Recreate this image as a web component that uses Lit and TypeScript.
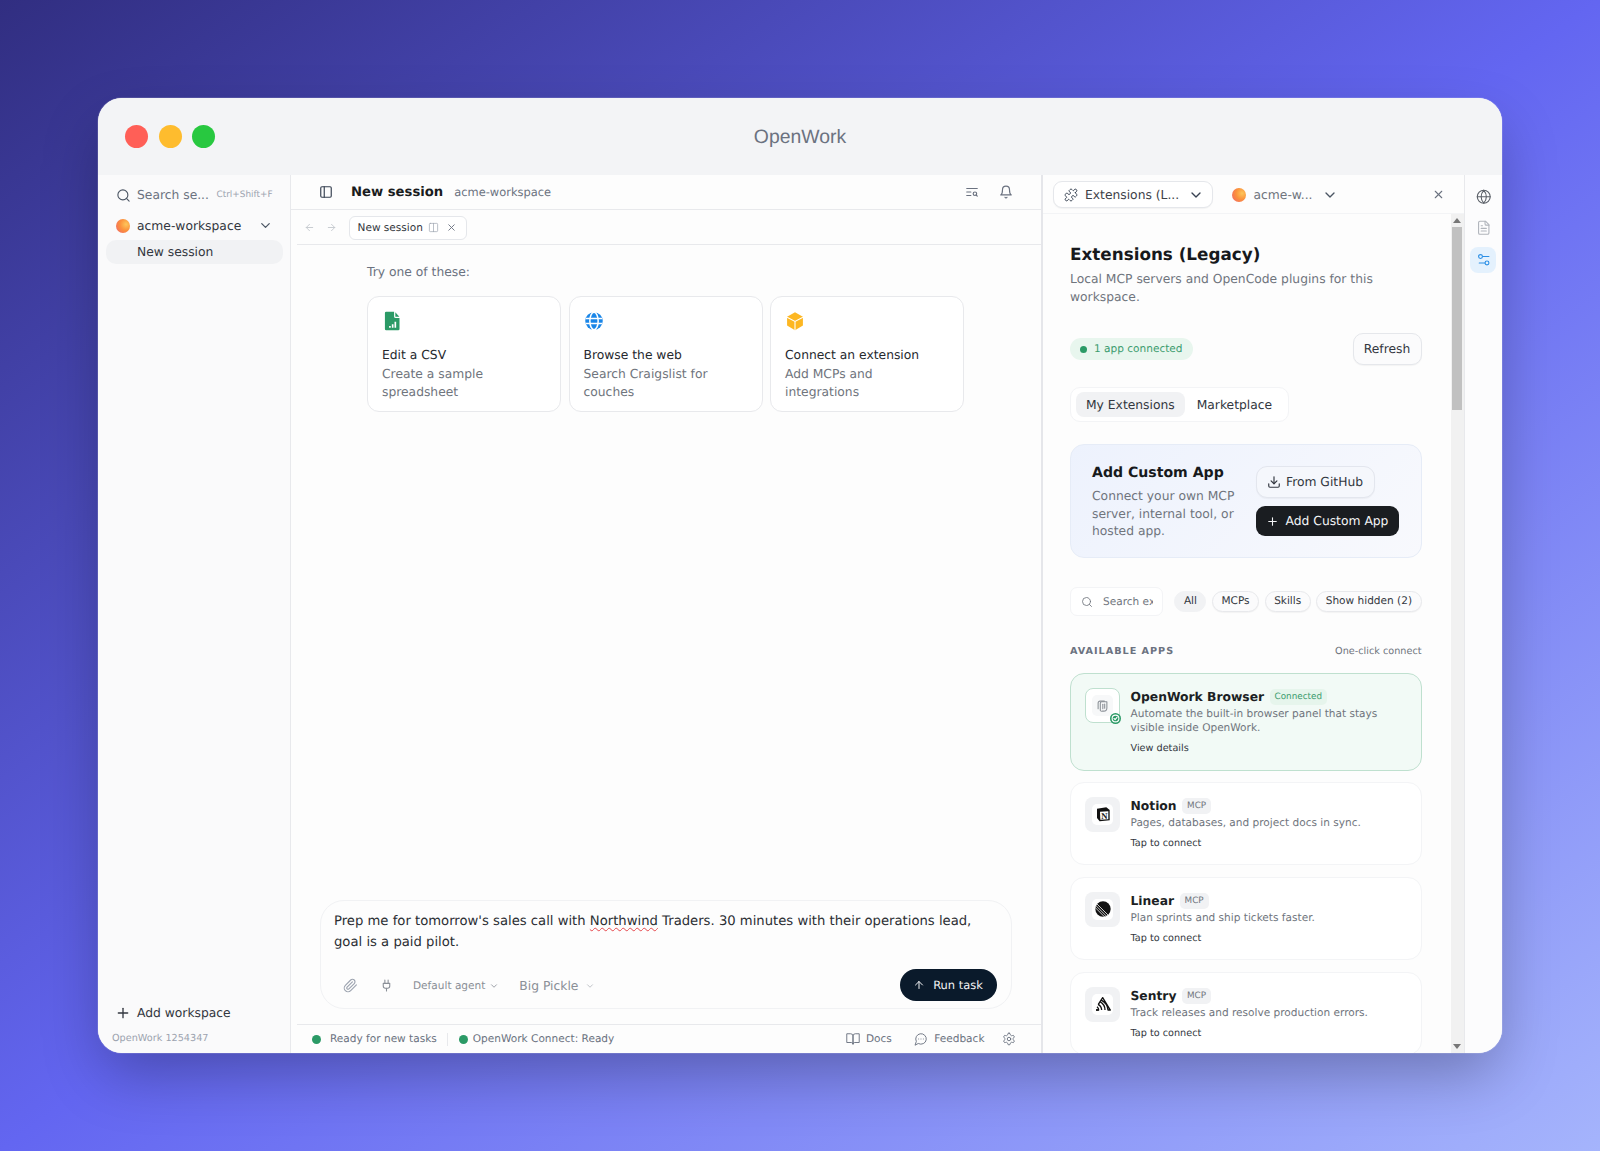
import { LitElement, html, css, svg } from "lit";
import { customElement } from "lit/decorators.js";

const ic = (body: unknown, cls = "") => html`<svg class="ic ${cls}" viewBox="0 0 24 24" fill="none" stroke="currentColor" stroke-width="2" stroke-linecap="round" stroke-linejoin="round">${body}</svg>`;

const I = {
  search: svg`<circle cx="11" cy="11" r="8"/><path d="m21 21-4.3-4.3"/>`,
  panel: svg`<rect x="3" y="3" width="18" height="18" rx="2"/><path d="M9 3v18"/>`,
  chev: svg`<path d="m6 9 6 6 6-6"/>`,
  left: svg`<path d="m12 19-7-7 7-7"/><path d="M19 12H5"/>`,
  right: svg`<path d="M5 12h14"/><path d="m12 5 7 7-7 7"/>`,
  cols: svg`<rect x="3" y="3" width="18" height="18" rx="2"/><path d="M12 3v18"/>`,
  x: svg`<path d="M18 6 6 18"/><path d="m6 6 12 12"/>`,
  textSearch: svg`<path d="M21 6H3"/><path d="M10 12H3"/><path d="M10 18H3"/><circle cx="17" cy="15" r="3"/><path d="m21 19-1.9-1.9"/>`,
  bell: svg`<path d="M6 8a6 6 0 0 1 12 0c0 7 3 9 3 9H3s3-2 3-9"/><path d="M10.3 21a1.94 1.94 0 0 0 3.4 0"/>`,
  puzzle: svg`<path d="M19.439 7.85c-.049.322.059.648.289.878l1.568 1.568c.47.47.706 1.087.706 1.704s-.235 1.233-.706 1.704l-1.611 1.611a.98.98 0 0 1-.837.276c-.47-.07-.802-.48-.968-.925a2.501 2.501 0 1 0-3.214 3.214c.446.166.855.497.925.968a.979.979 0 0 1-.276.837l-1.61 1.61a2.404 2.404 0 0 1-1.705.707 2.402 2.402 0 0 1-1.704-.706l-1.568-1.568a1.026 1.026 0 0 0-.877-.29c-.493.074-.84.504-1.02.968a2.5 2.5 0 1 1-3.237-3.237c.464-.18.894-.527.967-1.02a1.026 1.026 0 0 0-.289-.877l-1.568-1.568A2.402 2.402 0 0 1 1.998 12c0-.617.236-1.234.706-1.704L4.23 8.77c.24-.24.581-.353.917-.303.515.077.877.528 1.073 1.01a2.5 2.5 0 1 0 3.259-3.259c-.482-.196-.933-.558-1.01-1.073-.05-.336.062-.676.303-.917l1.525-1.525A2.402 2.402 0 0 1 12 1.998c.617 0 1.234.236 1.704.706l1.568 1.568c.23.23.556.338.877.29.493-.074.84-.504 1.02-.968a2.5 2.5 0 1 1 3.237 3.237c-.464.18-.894.527-.967 1.02Z"/>`,
  globe: svg`<circle cx="12" cy="12" r="10"/><path d="M12 2a14.5 14.5 0 0 0 0 20 14.5 14.5 0 0 0 0-20"/><path d="M2 12h20"/>`,
  file: svg`<path d="M15 2H6a2 2 0 0 0-2 2v16a2 2 0 0 0 2 2h12a2 2 0 0 0 2-2V7Z"/><path d="M14 2v4a2 2 0 0 0 2 2h4"/><path d="M10 9H8"/><path d="M16 13H8"/><path d="M16 17H8"/>`,
  sliders: svg`<path d="M20 7h-9"/><path d="M14 17H5"/><circle cx="17" cy="17" r="3"/><circle cx="7" cy="7" r="3"/>`,
  download: svg`<path d="M21 15v4a2 2 0 0 1-2 2H5a2 2 0 0 1-2-2v-4"/><polyline points="7 10 12 15 17 10"/><line x1="12" y1="15" x2="12" y2="3"/>`,
  plus: svg`<path d="M5 12h14"/><path d="M12 5v14"/>`,
  clip: svg`<path d="m21.44 11.05-9.19 9.19a6 6 0 0 1-8.49-8.49l8.57-8.57A4 4 0 1 1 18 8.84l-8.59 8.57a2 2 0 0 1-2.83-2.83l8.49-8.48"/>`,
  plug: svg`<path d="M12 22v-5"/><path d="M9 8V2"/><path d="M15 8V2"/><path d="M18 8v5a4 4 0 0 1-4 4h-4a4 4 0 0 1-4-4V8Z"/>`,
  up: svg`<path d="m5 12 7-7 7 7"/><path d="M12 19V5"/>`,
  book: svg`<path d="M2 3h6a4 4 0 0 1 4 4v14a3 3 0 0 0-3-3H2z"/><path d="M22 3h-6a4 4 0 0 0-4 4v14a3 3 0 0 1 3-3h7z"/>`,
  msg: svg`<path d="M7.9 20A9 9 0 1 0 4 16.1L2 22Z"/><path d="M8 12h.01"/><path d="M12 12h.01"/><path d="M16 12h.01"/>`,
  gear: svg`<path d="M12.22 2h-.44a2 2 0 0 0-2 2v.18a2 2 0 0 1-1 1.73l-.43.25a2 2 0 0 1-2 0l-.15-.08a2 2 0 0 0-2.73.73l-.22.38a2 2 0 0 0 .73 2.73l.15.1a2 2 0 0 1 1 1.72v.51a2 2 0 0 1-1 1.74l-.15.09a2 2 0 0 0-.73 2.73l.22.38a2 2 0 0 0 2.73.73l.15-.08a2 2 0 0 1 2 0l.43.25a2 2 0 0 1 1 1.73V20a2 2 0 0 0 2 2h.44a2 2 0 0 0 2-2v-.18a2 2 0 0 1 1-1.73l.43-.25a2 2 0 0 1 2 0l.15.08a2 2 0 0 0 2.73-.73l.22-.39a2 2 0 0 0-.73-2.73l-.15-.08a2 2 0 0 1-1-1.74v-.5a2 2 0 0 1 1-1.74l.15-.09a2 2 0 0 0 .73-2.73l-.22-.38a2 2 0 0 0-2.73-.73l-.15.08a2 2 0 0 1-2 0l-.43-.25a2 2 0 0 1-1-1.73V4a2 2 0 0 0-2-2z"/><circle cx="12" cy="12" r="3"/>`,
};

const sheetIcon = html`<svg class="card-ic" viewBox="0 0 24 24"><path fill="#2b9a66" d="M5 1h9.500v5.500a2 2 0 0 0 2 2H21V21.500a1.500 1.500 0 0 1-1.500 1.500H5a1.500 1.500 0 0 1-1.500-1.500V2.500A1.500 1.500 0 0 1 5 1Z"/><path fill="#2b9a66" d="M16 1.500 20.800 7H16.500a.5.5 0 0 1-.5-.5Z"/><path fill="#fff" d="M8.500 18h2v2h-2zM11.800 16h2v4h-2zM15 13h2v7h-2z"/></svg>`;
const webIcon = html`<svg class="card-ic" viewBox="0 0 24 24"><circle cx="12" cy="12" r="10.500" fill="#1a86e8"/><g fill="none" stroke="#fff" stroke-width="1.800"><ellipse cx="12" cy="12" rx="5" ry="10.500"/><path d="M2 9h20M2 15h20"/></g></svg>`;
const boxIcon = html`<svg class="card-ic" viewBox="0 0 24 24"><path fill="#fdb722" d="M12 1.500 21.500 7v10.500L12 23 2.500 17.500V7Z"/><path fill="none" stroke="#fff" stroke-width="1.300" d="M2.500 7.500 12 12.500l9.500-5M12 12.500V23"/></svg>`;

const browserLogo = html`<svg class="logo-ic" viewBox="0 0 24 24" fill="none" stroke="#8b9097" stroke-width="1.700" stroke-linecap="round" stroke-linejoin="round"><path d="M5 17V8a3 3 0 0 1 3-3h7"/><path d="M8.500 20V8.500a2.500 2.500 0 0 1 2.500-2.500h8V16a5 5 0 0 1-5 5h-2a3.500 3.500 0 0 1-3.500-1Z"/><path d="M12.500 10v7"/><path d="M15.500 9.500v7"/></svg>`;
const notionLogo = html`<svg class="logo-ic" viewBox="0 0 24 24"><path fill="#111" d="M3 4 17 2l5 4v15.500L7 23l-4-5Z"/><path fill="#fff" d="M7.500 8.800 20 8v11.800L8 20.800Z"/><text x="14" y="18.800" text-anchor="middle" font-family="Liberation Serif, serif" font-weight="700" font-size="13" fill="#111">N</text></svg>`;
const linearLogo = html`<svg class="logo-ic" viewBox="0 0 24 24"><circle cx="12" cy="12" r="11.500" fill="#111"/><g stroke="#fff" stroke-width="1.200"><path d="M0 9.500 14.500 24"/><path d="M0 5.500 18.500 24"/><path d="M1 2.500 21.500 23"/></g></svg>`;
const sentryLogo = html`<svg class="logo-ic" viewBox="0 0 24 24" fill="none" stroke="#111" stroke-width="2" stroke-linejoin="round"><path d="M1.500 21h4a6 6 0 0 0-2.500-5"/><path d="M5.500 21h-4"/><path d="M10 21a10 10 0 0 0-5.500-8.500"/><path d="M15 21A14.500 14.500 0 0 0 7.500 8.500"/><path d="M5 12.500 11.500 2.500 23 21h-3.500a18 18 0 0 0-9.500-14.500"/></svg>`;

const apps = [
  { name: "Notion", desc: "Pages, databases, and project docs in sync.", logo: notionLogo },
  { name: "Linear", desc: "Plan sprints and ship tickets faster.", logo: linearLogo },
  { name: "Sentry", desc: "Track releases and resolve production errors.", logo: sentryLogo },
];

@customElement("app-root")
export class AppRoot extends LitElement {
  static styles = css`
    :host {
      display: block;
      height: 1151px;
      box-sizing: border-box;
      padding: 98px;
      overflow: hidden;
      font-family: "DejaVu Sans", sans-serif;
      text-rendering: geometricPrecision;
      color: #1c1f24;
      background: linear-gradient(to bottom right, #312e81 0%, #6366f1 50%, #a5b4fc 100%);
    }
    * { box-sizing: border-box; }
    .ic { display: block; flex: none; width: 14px; height: 14px; }
    .window {
      height: 955px;
      border-radius: 24px;
      overflow: hidden;
      display: flex;
      flex-direction: column;
      background: #fdfdfd;
      box-shadow: 0 0 0 1px rgba(255,255,255,.12), 0 25px 60px -5px rgba(0,0,0,.28);
    }
    .titlebar {
      flex: none;
      height: 77px;
      background: #f3f4f6;
      display: flex;
      align-items: center;
      padding-left: 27px;
    }
    .lights { display: flex; gap: 10.500px; }
    .light { width: 23px; height: 23px; border-radius: 50%; }
    .red { background: #ff5f57; } .yellow { background: #febc2e; } .green { background: #28c840; }
    .app-title {
      flex: 1;
      text-align: center;
      margin-left: -117px;
      padding-top: 2px;
      font-family: "Liberation Sans", sans-serif;
      font-size: 19.400px;
      color: #6b7280;
    }
    .body { flex: 1; min-height: 0; display: flex; }

    .sidebar {
      flex: none;
      width: 193px;
      background: #fafafb;
      border-right: 1px solid #e8e9ec;
      display: flex;
      flex-direction: column;
      padding: 0 7.500px 0 8px;
    }
    .side-search { display: flex; align-items: center; height: 40px; padding: 0 0 0 10px; color: #6b7280; font-size: 12.320px; white-space: nowrap; }
    .side-search .ic { width: 15px; height: 15px; margin-right: 6px; color: #4b5563; stroke-width: 1.800; }
    .side-search .kbd { margin-left: auto; margin-right: 10px; font-size: 8.900px; color: #9ca3af; }
    .ws { display: flex; align-items: center; height: 27px; margin-top: -3px; padding-left: 10px; font-size: 12.320px; color: #333740; white-space: nowrap; }
    .avatar { flex: none; width: 14px; height: 14px; border-radius: 50%; background: radial-gradient(circle at 72% 38%, #fdc65a, #fb923c 45%, #f0616d 100%); }
    .ws .avatar { margin-right: 7px; }
    .ws .ic { margin-left: auto; margin-right: 10px; width: 15px; height: 15px; color: #4b5563; }
    .side-item { height: 24px; margin-top: 1px; border-radius: 10px; background: #f1f2f4; padding-left: 31px; font-size: 12.320px; line-height: 24px; color: #333740; }
    .grow { flex: 1; }
    .add-ws { display: flex; align-items: center; gap: 6px; height: 16px; padding-left: 9px; font-size: 12.320px; color: #333740; margin-bottom: 12px; }
    .add-ws .ic { width: 16px; height: 16px; }
    .version { font-size: 9.680px; color: #9ca3af; padding: 0 0 9.500px 6px; }

    .main { flex: 1; min-width: 0; display: flex; flex-direction: column; background: #fdfdfd; }
    .main-head { flex: none; height: 35px; border-bottom: 1px solid #e8e9ec; display: flex; align-items: center; padding: 0 28px; }
    .main-head .panel { width: 14px; height: 14px; color: #374151; margin-right: 18px; }
    .main-head b { font-size: 13.200px; font-weight: 700; color: #1a1c20; margin-right: 11px; }
    .main-head .sub { font-size: 11.440px; color: #6b7280; }
    .head-actions { margin-left: auto; display: flex; gap: 19.500px; color: #6b7280; }
    .tabs { flex: none; height: 35px; margin-left: 6px; padding-top: 1px; border-bottom: 1px solid #e8e9ec; display: flex; align-items: center; padding-left: 7px; }
    .tabs .arrow { width: 11px; height: 11px; color: #c4c8ce; margin-right: 11px; }
    .tab { display: flex; align-items: center; height: 24px; padding: 0 9px 0 7.500px; margin-left: 1px; border: 1px solid #e5e7eb; border-radius: 6px; background: #fff; font-size: 10.560px; color: #333740; white-space: nowrap; }
    .tab .cols { width: 11px; height: 11px; margin: 0 7.500px 0 5px; color: #9ca3af; stroke-width: 1.500; }
    .tab .x { width: 11px; height: 11px; color: #6b7280; }
    .content { flex: 1; min-height: 0; padding: 18px 0 0 76px; }
    .try { font-size: 12.320px; color: #6b7280; line-height: 18px; margin-bottom: 15px; }
    .cards { display: flex; gap: 7.500px; }
    .card { width: 194px; height: 116px; border: 1px solid #e8e9ec; border-radius: 12px; background: #fff; padding: 14px 14px 0 14px; }
    .card-ic { display: block; width: 20px; height: 20px; margin-bottom: 16px; }
    .card .t { font-size: 12.320px; line-height: 17px; color: #26292e; }
    .card .d { font-size: 12.320px; line-height: 17.500px; color: #70757d; margin-top: 2px; }
    .composer { flex: none; margin: 0 29px 15px 29px; height: 109px; border: 1px solid #f1f2f4; border-radius: 24px; padding: 10px 14px 0 13px; display: flex; flex-direction: column; background: #fdfdfd; }
    .prompt { font-size: 13.200px; line-height: 21px; color: #2b2e33; }
    .spell { text-decoration: underline wavy #e5484d 1px; text-underline-offset: 2px; }
    .tools { margin-top: auto; margin-bottom: 7px; display: flex; align-items: center; color: #8a8f97; margin-left: 9px; }
    .tools .clip { width: 15px; height: 15px; color: #9ca3af; margin-right: 21px; stroke-width: 1.800; }
    .tools .plug { width: 13px; height: 13px; color: #8a8f97; margin-left: 1px; margin-right: 20px; }
    .pick { display: flex; align-items: center; gap: 4px; padding-top: 2px; font-size: 10.560px; color: #8a8f97; margin-right: 20px; white-space: nowrap; }
    .pick.big { font-size: 12.320px; }
    .pick .ic { width: 10px; height: 10px; }
    .pick.big .ic { color: #b4b8be; margin-left: 3px; }
    .run { margin-left: auto; display: flex; align-items: center; justify-content: center; gap: 8px; width: 97px; height: 32px; border-radius: 16px; background: #0a1a2b; color: #f3f4f6; font-size: 11.440px; }
    .run .ic { width: 12px; height: 12px; }
    .status { flex: none; height: 29px; margin-left: 6px; border-top: 1px solid #e8e9ec; display: flex; align-items: center; padding: 0 25px 0 15px; font-size: 10.560px; color: #6b7280; white-space: nowrap; }
    .dot { flex: none; width: 9px; height: 9px; border-radius: 50%; background: #2b9a66; }
    .status .dot { margin-right: 9px; }
    .status .sep { width: 1px; height: 13px; background: #e8e9ec; margin: 0 10.500px; }
    .status .second { margin-right: 5px; }
    .status .link { display: flex; align-items: center; gap: 6px; margin-left: 22.500px; }
    .status .first-link { margin-left: auto; }
    .status .gear-link { margin-left: 17px; }
    .status .link .ic { width: 14px; height: 14px; stroke-width: 1.600; }

    .panel-r { flex: none; width: 423px; border-left: 2px solid #e5e6ea; display: flex; flex-direction: column; background: #fdfdfd; }
    .panel-head { flex: none; height: 39px; display: flex; align-items: center; padding: 1px 18.500px 0 10px; border-bottom: 1px solid #f3f4f6; white-space: nowrap; }
    .sel { display: flex; align-items: center; flex: none; width: 160.500px; height: 27px; border: 1px solid #e5e7eb; border-radius: 9px; background: #fff; padding: 0 8px 0 10px; font-size: 12.320px; color: #3d4148; box-shadow: 0 1px 1px rgba(0,0,0,.04); }
    .sel .ic { width: 14px; height: 14px; }
    .sel .pz { margin-right: 7.500px; color: #374151; stroke-width: 1.700; }
    .sel .cv { width: 16px; height: 16px; margin-left: auto; color: #374151; }
    .ws-sel { display: flex; align-items: center; margin-left: 18.500px; font-size: 12.320px; color: #70757d; }
    .ws-sel .avatar { margin-right: 8px; }
    .ws-sel .ic { width: 16px; height: 16px; margin-left: 9px; color: #4b5563; }
    .panel-head .close { margin-left: auto; width: 13px; height: 13px; color: #6b7280; }
    .panel-main { flex: 1; min-height: 0; display: flex; }
    .scroll { flex: 1; min-width: 0; overflow: hidden; padding: 27px 29px 0 27.500px; }
    .h1 { font-size: 16.800px; font-weight: 700; color: #17191c; line-height: 26px; }
    .desc { font-size: 12.320px; line-height: 17.500px; color: #70757d; margin-top: 4px; width: 330px; }
    .row { display: flex; align-items: center; justify-content: space-between; margin-top: 27px; }
    .badge { display: flex; align-items: center; gap: 7px; height: 22px; padding: 0 10px; border-radius: 11px; background: #e8f6ee; color: #3c9c6e; font-size: 10.560px; }
    .badge .dot { width: 7px; height: 7px; }
    .refresh { height: 32px; width: 69px; border: 1px solid #e5e7eb; border-radius: 10px; background: #fbfbfc; font-size: 12.320px; color: #333740; display: flex; align-items: center; justify-content: center; box-shadow: 0 1px 1px rgba(0,0,0,.04); }
    .seg { margin-top: 22px; display: inline-flex; gap: 1px; height: 35px; padding: 4px 5.500px 4px 4.500px; border: 1px solid #f3f4f6; border-radius: 10px; background: #fff; font-size: 12.320px; color: #333740; align-items: stretch; vertical-align: top; }
    .seg span { display: flex; align-items: center; justify-content: center; padding: 0 10.500px; border-radius: 8px; white-space: nowrap; }
    .seg .on { background: #f1f2f4; }
    .custom { margin-top: 22px; height: 114px; border: 1px solid #e6ecf7; border-radius: 14px; background: linear-gradient(135deg, #edf2fd, #f8f9fd); padding: 19px 22px 0 21px; display: flex; justify-content: space-between; }
    .custom .tt { font-size: 14.080px; font-weight: 700; color: #17191c; line-height: 18px; }
    .custom .dd { font-size: 12.320px; line-height: 17.500px; color: #70757d; margin-top: 6px; width: 160px; }
    .custom .btns { display: flex; flex-direction: column; align-items: flex-start; gap: 8px; padding-top: 2px; }
    .gh { height: 32px; width: 119px; border: 1px solid #e3e6ee; border-radius: 11px; background: #f5f7fc; display: flex; align-items: center; justify-content: center; gap: 5px; font-size: 12.320px; color: #333740; white-space: nowrap; box-shadow: 0 1px 1px rgba(0,0,0,.04); }
    .gh .ic { width: 14px; height: 14px; }
    .addbtn { height: 30px; width: 143px; border-radius: 9px; background: #1a1d21; color: #f3f4f6; display: flex; align-items: center; justify-content: center; gap: 7px; font-size: 12.320px; white-space: nowrap; }
    .addbtn .ic { width: 13px; height: 13px; }
    .filters { margin-top: 29px; display: flex; align-items: center; gap: 5.500px; }
    .sbox { flex: none; width: 93px; height: 29px; border: 1px solid #f3f4f6; border-radius: 7px; background: #fff; display: flex; align-items: center; padding: 0 10px; gap: 10px; font-size: 10.560px; color: #70757d; margin-right: auto; overflow: hidden; white-space: nowrap; }
    .sbox .ic { width: 12px; height: 12px; stroke-width: 1.700; }
    .sbox span { flex: none; width: 50px; overflow: hidden; }
    .pill { flex: none; height: 21px; padding: 0 8.500px; border: 1px solid #e8e9ec; border-radius: 11px; background: #fbfbfc; font-size: 10.560px; line-height: 19px; color: #333740; white-space: nowrap; box-shadow: 0 1px 1px rgba(0,0,0,.04); }
    .pill.on { background: #f1f2f4; border-color: #f1f2f4; box-shadow: none; }
    .sec { margin-top: 27px; display: flex; justify-content: space-between; align-items: center; height: 16px; }
    .sec b { font-size: 9.680px; font-weight: 700; letter-spacing: .1em; color: #6b7280; }
    .sec span { font-size: 9.680px; color: #70757d; }
    .app { display: flex; margin-bottom: 11.400px; border: 1px solid #f3f4f6; border-radius: 14px; background: #fff; padding: 14px 14px 0 14px; height: 83.500px; }
    .app.first { margin-top: 14px; height: 97.500px; background: #f2faf6; border-color: #bfe0cf; }
    .tile { position: relative; flex: none; width: 35px; height: 35px; border-radius: 8px; background: #f1f2f4; display: flex; align-items: center; justify-content: center; margin-right: 10.500px; }
    .first .tile { background: #fff; border: 1px solid #bfe0cf; }
    .inner { width: 21px; height: 21px; border-radius: 5px; background: #fff; display: flex; align-items: center; justify-content: center; }
    .logo-ic { display: block; width: 16px; height: 16px; }
    .first .logo-ic { width: 15px; height: 15px; }
    .first .inner { background: #f7f8f9; }
    .tick { position: absolute; right: -1.500px; bottom: -2px; width: 11px; height: 11px; border-radius: 50%; background: #2b9a66; color: #fff; display: flex; align-items: center; justify-content: center; }
    .tick svg { display: block; width: 9px; height: 9px; }
    .info { min-width: 0; padding-top: 1px; }
    .nm { display: flex; align-items: center; gap: 5.500px; height: 16px; }
    .nm b { font-size: 12.320px; font-weight: 700; color: #1c1f24; white-space: nowrap; }
    .tag { font-size: 8.800px; line-height: 16px; height: 16px; padding: 0 5px; border-radius: 5px; background: #f1f2f4; color: #70757d; }
    .first .tag { background: #e6f5ec; color: #3c9c6e; }
    .ds { font-size: 10.560px; line-height: 14px; color: #70757d; margin-top: 2px; }
    .act { font-size: 9.680px; color: #333740; line-height: 14px; margin-top: 7px; }

    .sb { flex: none; width: 13px; background: #f1f1f1; display: flex; flex-direction: column; align-items: center; }
    .sb .tri { flex: none; height: 13px; display: flex; align-items: center; justify-content: center; }
    .sb .tri svg { display: block; width: 8px; height: 5px; fill: #777; }
    .sb .thumb { flex: none; width: 9.500px; height: 183px; background: #c1c1c1; }
    .rail { flex: none; width: 38.500px; background: #fcfcfd; border-left: 1px solid #e8e9ec; display: flex; flex-direction: column; align-items: center; padding-top: 8.500px; gap: 5.500px; }
    .rail div { width: 26px; height: 26px; border-radius: 8px; display: flex; align-items: center; justify-content: center; color: #5b6068; }
    .rail .ic { width: 15.500px; height: 15.500px; stroke-width: 1.700; }
    .rail .dim { color: #b0b4bb; }
    .rail .act-r { background: #e4f1fd; color: #2b8fe6; }
  `;

  render() {
    return html`
      <div class="window">
        <div class="titlebar">
          <div class="lights"><div class="light red"></div><div class="light yellow"></div><div class="light green"></div></div>
          <div class="app-title">OpenWork</div>
        </div>
        <div class="body">
          <aside class="sidebar">
            <div class="side-search">${ic(I.search)}<span>Search se...</span><span class="kbd">Ctrl+Shift+F</span></div>
            <div class="ws"><span class="avatar"></span>acme-workspace${ic(I.chev)}</div>
            <div class="side-item">New session</div>
            <div class="grow"></div>
            <div class="add-ws">${ic(I.plus)}Add workspace</div>
            <div class="version">OpenWork 1254347</div>
          </aside>
          <main class="main">
            <div class="main-head">
              ${ic(I.panel, "panel")}
              <b>New session</b><span class="sub">acme-workspace</span>
              <div class="head-actions">${ic(I.textSearch)}${ic(I.bell)}</div>
            </div>
            <div class="tabs">
              ${ic(I.left, "arrow")}${ic(I.right, "arrow")}
              <div class="tab">New session${ic(I.cols, "cols")}${ic(I.x, "x")}</div>
            </div>
            <div class="content">
              <div class="try">Try one of these:</div>
              <div class="cards">
                <div class="card">${sheetIcon}<div class="t">Edit a CSV</div><div class="d">Create a sample spreadsheet</div></div>
                <div class="card">${webIcon}<div class="t">Browse the web</div><div class="d">Search Craigslist for couches</div></div>
                <div class="card">${boxIcon}<div class="t">Connect an extension</div><div class="d">Add MCPs and integrations</div></div>
              </div>
            </div>
            <div class="composer">
              <div class="prompt">Prep me for tomorrow's sales call with <span class="spell">Northwind</span> Traders. 30 minutes with their operations lead, goal is a paid pilot.</div>
              <div class="tools">
                ${ic(I.clip, "clip")}${ic(I.plug, "plug")}
                <div class="pick">Default agent${ic(I.chev)}</div>
                <div class="pick big">Big Pickle${ic(I.chev)}</div>
                <div class="run">${ic(I.up)}Run task</div>
              </div>
            </div>
            <div class="status">
              <span class="dot"></span>Ready for new tasks<span class="sep"></span><span class="dot second"></span>OpenWork Connect: Ready
              <span class="link first-link">${ic(I.book)}Docs</span>
              <span class="link">${ic(I.msg)}Feedback</span>
              <span class="link gear-link">${ic(I.gear)}</span>
            </div>
          </main>
          <section class="panel-r">
            <div class="panel-head">
              <div class="sel">${ic(I.puzzle, "pz")}Extensions (L...${ic(I.chev, "cv")}</div>
              <div class="ws-sel"><span class="avatar"></span>acme-w...${ic(I.chev)}</div>
              ${ic(I.x, "close")}
            </div>
            <div class="panel-main">
              <div class="scroll">
                <div class="h1">Extensions (Legacy)</div>
                <div class="desc">Local MCP servers and OpenCode plugins for this workspace.</div>
                <div class="row">
                  <div class="badge"><span class="dot"></span>1 app connected</div>
                  <div class="refresh">Refresh</div>
                </div>
                <div class="seg"><span class="on">My Extensions</span><span>Marketplace</span></div>
                <div class="custom">
                  <div><div class="tt">Add Custom App</div><div class="dd">Connect your own MCP server, internal tool, or hosted app.</div></div>
                  <div class="btns">
                    <div class="gh">${ic(I.download)}From GitHub</div>
                    <div class="addbtn">${ic(I.plus)}Add Custom App</div>
                  </div>
                </div>
                <div class="filters">
                  <div class="sbox">${ic(I.search)}<span>Search ex</span></div>
                  <div class="pill on">All</div><div class="pill">MCPs</div><div class="pill">Skills</div><div class="pill">Show hidden (2)</div>
                </div>
                <div class="sec"><b>AVAILABLE APPS</b><span>One-click connect</span></div>
                <div class="app first">
                  <div class="tile"><div class="inner">${browserLogo}</div><div class="tick"><svg viewBox="0 0 24 24" fill="none" stroke="currentColor" stroke-width="3" stroke-linecap="round" stroke-linejoin="round"><circle cx="12" cy="12" r="9"/><path d="m8 12 3 3 5-6"/></svg></div></div>
                  <div class="info"><div class="nm"><b>OpenWork Browser</b><span class="tag">Connected</span></div><div class="ds">Automate the built-in browser panel that stays visible inside OpenWork.</div><div class="act">View details</div></div>
                </div>
                ${apps.map((a) => html`
                  <div class="app">
                    <div class="tile"><div class="inner">${a.logo}</div></div>
                    <div class="info"><div class="nm"><b>${a.name}</b><span class="tag">MCP</span></div><div class="ds">${a.desc}</div><div class="act">Tap to connect</div></div>
                  </div>`)}
              </div>
              <div class="sb">
                <div class="tri"><svg viewBox="0 0 8 5"><path d="M4 0 8 5H0Z"/></svg></div>
                <div class="thumb"></div>
                <div class="grow"></div>
                <div class="tri"><svg viewBox="0 0 8 5"><path d="M4 5 0 0h8Z"/></svg></div>
              </div>
            </div>
          </section>
          <nav class="rail">
            <div>${ic(I.globe)}</div>
            <div class="dim">${ic(I.file)}</div>
            <div class="act-r">${ic(I.sliders)}</div>
          </nav>
        </div>
      </div>
    `;
  }
}
